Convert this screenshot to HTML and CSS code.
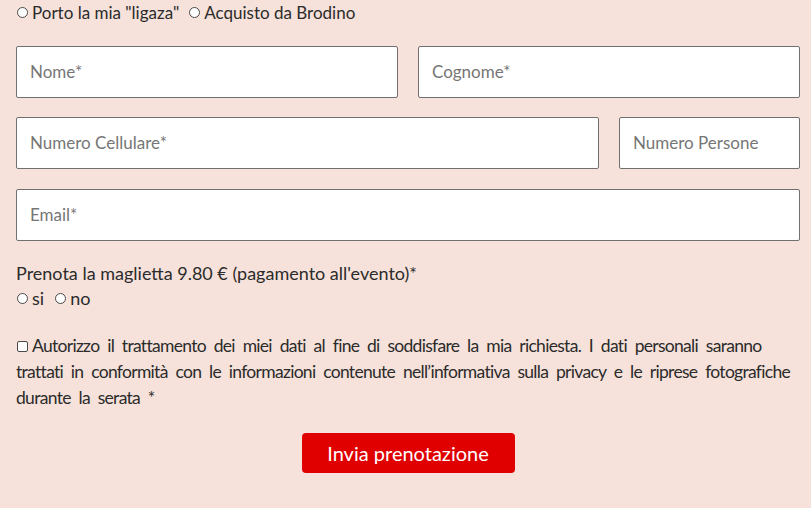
FILE: index.html
```html
<!DOCTYPE html>
<html lang="it">
<head>
    <meta charset="UTF-8">
    <meta name="viewport" content="width=device-width, initial-scale=1.0">
    <title>Prenotazione</title>
    <link rel="stylesheet" href="styles.css">
</head>
<body>
    <form class="booking">
        <div class="choice-row top">
            <label class="choice"><input type="radio" name="tipo"> Porto la mia "ligaza"</label>
            <label class="choice"><input type="radio" name="tipo"> Acquisto da Brodino</label>
        </div>

        <div class="field-row half">
            <input class="field" type="text" placeholder="Nome*">
            <input class="field" type="text" placeholder="Cognome*">
        </div>

        <div class="field-row phone">
            <input class="field" type="tel" placeholder="Numero Cellulare*">
            <input class="field" type="number" placeholder="Numero Persone">
        </div>

        <div class="field-row mail">
            <input class="field" type="email" placeholder="Email*">
        </div>

        <div class="shirt">
            <p class="shirt-label">Prenota la maglietta 9.80 € (pagamento all'evento)*</p>
            <div class="choice-row">
                <label class="choice"><input type="radio" name="maglia">si</label>
                <label class="choice"><input type="radio" name="maglia">no</label>
            </div>
        </div>

        <label class="privacy"><input type="checkbox">Autorizzo il trattamento dei miei dati al fine di soddisfare la mia richiesta. I dati personali saranno trattati in conformità con le informazioni contenute nell’informativa sulla privacy e le riprese fotografiche durante la serata *</label>

        <div class="actions">
            <button class="send" type="submit">Invia prenotazione</button>
        </div>
    </form>
</body>
</html>
```

FILE: styles.css
```css
* {
    margin: 0;
    padding: 0;
    box-sizing: border-box;
}

body {
    background: #f6e2da;
    font-family: Lato, "Liberation Sans", sans-serif;
    font-size: 18px;
    color: #2b2b2b;
    padding: 0 11px 0 16px;
}

.booking {
    display: flex;
    flex-direction: column;
}

.choice-row {
    display: flex;
    gap: 10px;
    line-height: 25px;
}

.choice-row.top {
    gap: 9px;
    font-size: 17px;
    margin-bottom: 21px;
}

.choice {
    display: flex;
    align-items: center;
    gap: 4px;
}

.choice input[type="radio"] {
    appearance: none;
    width: 11px;
    height: 11px;
    margin-left: 1px;
    border: 1px solid #4a4a4a;
    border-radius: 50%;
    background: #fff;
}

.field-row {
    display: flex;
    gap: 20px;
    margin-bottom: 19px;
}

.field {
    flex: 1;
    height: 52px;
    border: 1px solid #707070;
    border-radius: 2px;
    background: #fff;
    padding: 0 13px 1px;
    font: inherit;
    font-size: 17px;
    color: #333;
    min-width: 0;
}

.field::placeholder {
    color: #767676;
}

.phone {
    margin-bottom: 20px;
}

.phone .field:last-child {
    flex: 0 0 181px;
}

.mail {
    margin-bottom: 20px;
}

.shirt {
    margin-bottom: 22px;
}

.shirt-label {
    line-height: 25px;
}

.privacy {
    display: block;
    font-size: 17.5px;
    line-height: 26px;
    letter-spacing: -0.7px;
    word-spacing: 4px;
}

.privacy input {
    appearance: none;
    width: 11px;
    height: 11px;
    margin: 0 4px 0 1px;
    border: 1px solid #4a4a4a;
    border-radius: 2px;
    background: #fff;
    vertical-align: 0;
}

.actions {
    display: flex;
    justify-content: center;
    margin-top: 22px;
}

.send {
    width: 213px;
    height: 40px;
    border: none;
    border-radius: 4px;
    background: #e00000;
    color: #fff;
    font-family: inherit;
    font-size: 20px;
}
```
